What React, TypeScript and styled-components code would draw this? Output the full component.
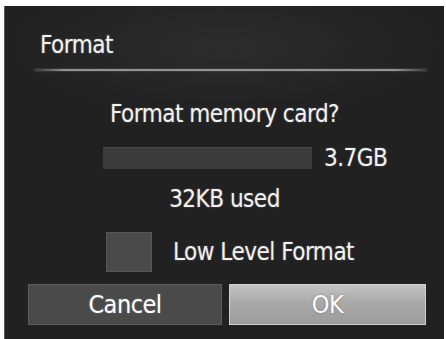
import React from "react";
import styled, { createGlobalStyle } from "styled-components";

const Global = createGlobalStyle`
  html, body { margin: 0; padding: 0; background: #ffffff; }
  body { font-family: "Liberation Sans Narrow", "DejaVu Sans Condensed", "Liberation Sans", sans-serif; }
`;

const Panel = styled.div`
  box-sizing: border-box;
  width: 440px;
  height: 333px;
  margin: 6px 0 0 4px;
  background: radial-gradient(ellipse 70% 30% at 50% 12%, #2c2c2c 0%, #212121 70%), #212121;
  border-left: 1px solid #5a5a5a;
  display: flex;
  flex-direction: column;
  color: #f2f2f2;
  font-family: "Liberation Sans Narrow", "DejaVu Sans Condensed", "Liberation Sans", sans-serif;
  letter-spacing: -0.5px;
`;

const Header = styled.div`
  height: 63px;
  padding-left: 35px;
  display: flex;
  align-items: flex-end;
  box-sizing: border-box;
  padding-bottom: 10px;
`;

const Title = styled.div`
  font-size: 24px;
  line-height: 28px;
  text-shadow: 0 0 2px rgba(255,255,255,0.35);
`;

const Rule = styled.div`
  height: 2px;
  margin: 0 17px 0 29px;
  background: linear-gradient(90deg, rgba(140,140,140,0.2) 0%, #939393 8%, #939393 92%, rgba(140,140,140,0.2) 100%);
  box-shadow: 0 0 2px rgba(160,160,160,0.5);
`;

const Question = styled.div`
  margin-top: 29px;
  text-align: center;
  font-size: 24px;
  line-height: 28px;
  text-shadow: 0 0 2px rgba(255,255,255,0.3);
`;

const CapacityRow = styled.div`
  margin-top: 16px;
  padding-left: 98px;
  display: flex;
  align-items: center;
  gap: 12px;
`;

const Bar = styled.div`
  width: 209px;
  height: 22px;
  box-sizing: border-box;
  background: #3b3b3b;
  border-top: 1px solid #4a4a4a;
`;

const Value = styled.div`
  font-size: 24px;
  line-height: 28px;
  text-shadow: 0 0 2px rgba(255,255,255,0.3);
`;

const Used = styled.div`
  margin-top: 13px;
  text-align: center;
  font-size: 24px;
  line-height: 28px;
  text-shadow: 0 0 2px rgba(255,255,255,0.3);
`;

const OptionRow = styled.div`
  margin-top: 19px;
  padding-left: 101px;
  display: flex;
  align-items: center;
  gap: 21px;
`;

const Check = styled.div`
  width: 46px;
  height: 40px;
  box-sizing: border-box;
  background: #4a4a4a;
  border: 1px solid #575757;
`;

const Buttons = styled.div`
  margin-top: 12px;
  padding-left: 23px;
  display: flex;
  gap: 7px;
`;

const Button = styled.div<{ $primary?: boolean; $w: number }>`
  width: ${(p) => p.$w}px;
  height: 41px;
  box-sizing: border-box;
  display: flex;
  align-items: center;
  justify-content: center;
  font-size: 25px;
  color: #ffffff;
  background: ${(p) =>
    p.$primary
      ? "linear-gradient(180deg, #c4c4c4 0%, #a9a9a9 45%, #9c9c9c 100%)"
      : "#4a4a4a"};
  border: 1px solid ${(p) => (p.$primary ? "#d0d0d0" : "#5c5c5c")};
  text-shadow: ${(p) => (p.$primary ? "0 0 2px rgba(80,80,80,0.6)" : "0 0 2px rgba(255,255,255,0.3)")};
`;

export default function App() {
  return (
    <>
      <Global />
      <Panel>
        <Header>
          <Title>Format</Title>
        </Header>
        <Rule />
        <Question>Format memory card?</Question>
        <CapacityRow>
          <Bar />
          <Value>3.7GB</Value>
        </CapacityRow>
        <Used>32KB used</Used>
        <OptionRow>
          <Check />
          <Value>Low Level Format</Value>
        </OptionRow>
        <Buttons>
          <Button $w={194}>Cancel</Button>
          <Button $w={197} $primary>OK</Button>
        </Buttons>
      </Panel>
    </>
  );
}
